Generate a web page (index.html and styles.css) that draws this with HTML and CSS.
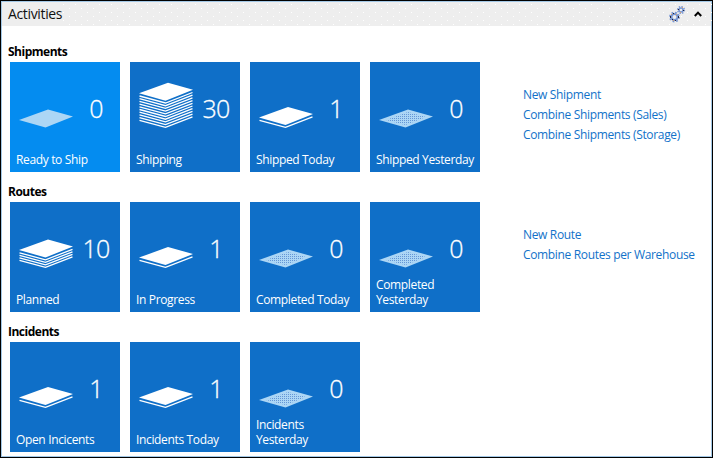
FILE: index.html
```html
<!DOCTYPE html>
<html lang="en">
<head>
<meta charset="utf-8">
<title>Activities</title>
<link rel="stylesheet" href="styles.css">
</head>
<body>
<svg class="defs" width="0" height="0" aria-hidden="true">
  <defs>
    <pattern id="dots" width="4" height="4" patternUnits="userSpaceOnUse">
      <rect width="4" height="4" fill="#acd6f5"/>
      <rect x="0" y="0" width="1" height="1" fill="#6496d6"/>
      <rect x="2" y="0" width="1" height="1" fill="#6496d6"/>
      <rect x="0" y="2" width="1" height="1" fill="#6496d6"/>
      <rect x="2" y="2" width="1" height="1" fill="#6496d6"/>
    </pattern>
    <pattern id="header-dots" width="12" height="8" patternUnits="userSpaceOnUse">
      <rect x="1" y="1" width="1" height="1" fill="#fff"/>
      <rect x="7" y="5" width="1" height="1" fill="#fff"/>
    </pattern>
    <path id="sheet" d="M9 58L38 47.5L63 54.5L35.5 65.5Z"/>
    <path id="edge" d="M9.5 58.3L35.5 65.3L62.5 54.8"/>
    <path id="inner" d="M16 58L38 50L56 55L35.5 63Z"/>
    <g id="blank"><use href="#sheet" class="flat"/><use href="#inner" class="dotted"/></g>
    <g id="stack2"><use href="#edge"/><use href="#sheet" class="top" y="-2.4"/></g>
    <g id="stack5"><use href="#edge"/><use href="#edge" y="-2.5"/><use href="#edge" y="-5"/><use href="#edge" y="-7.5"/><use href="#sheet" class="top" y="-10"/></g>
    <g id="stack11"><use href="#edge"/><use href="#edge" y="-2.7"/><use href="#edge" y="-5.4"/><use href="#edge" y="-8.1"/><use href="#edge" y="-10.8"/><use href="#edge" y="-13.5"/><use href="#edge" y="-16.2"/><use href="#edge" y="-18.9"/><use href="#edge" y="-21.6"/><use href="#edge" y="-24.3"/><use href="#sheet" class="top" y="-26.8"/></g>
  </defs>
</svg>
<main class="window">
  <header class="header">
    <svg class="header-dots" width="650" height="22"><rect width="650" height="22" fill="url(#header-dots)"/></svg>
    <h1>Activities</h1>
    <svg class="gears" width="17" height="17" viewBox="0 0 17 17">
      <g fill="none" stroke="#7796d2">
        <circle cx="5.5" cy="11" r="3" stroke-width="2"/>
        <circle cx="5.5" cy="11" r="4.6" stroke-width="1.6" stroke-dasharray="1.8 1.8"/>
        <circle cx="12" cy="4" r="2" stroke-width="1.6"/>
        <circle cx="12" cy="4" r="3.4" stroke-width="1.4" stroke-dasharray="1.4 1.27"/>
      </g>
      <g fill="#24243c"><path d="M1 10h1v2H1zM9 10h1v2H9zM4 7h1v1H4zM6 14h1v1H6zM9 3h1v1H9zM14 4h1v1h-1zM3 13h1v1H3z"/></g>
      <g fill="#dda066"><path d="M7 8h1v1H7zM2 8h1v1H2zM4 14h1v1H4zM13 1h1v1h-1zM11 6h1v1h-1z"/></g>
    </svg>
    <svg class="chevron" width="8" height="6" viewBox="0 0 8 6"><path d="M.8 5L4 1.6L7.2 5" fill="none" stroke="#000" stroke-width="2"/></svg>
  </header>

  <section class="group">
    <div class="cues">
      <h2>Shipments</h2>
      <div class="tiles">
        <div class="tile active"><svg class="pic"><use href="#sheet" class="flat"/></svg><b>0</b><span>Ready to Ship</span></div>
        <div class="tile"><svg class="pic"><use href="#stack11"/></svg><b>30</b><span>Shipping</span></div>
        <div class="tile"><svg class="pic"><use href="#stack2"/></svg><b>1</b><span>Shipped Today</span></div>
        <div class="tile"><svg class="pic"><use href="#blank"/></svg><b>0</b><span>Shipped Yesterday</span></div>
      </div>
    </div>
    <nav class="links"><a>New Shipment</a><a>Combine Shipments (Sales)</a><a>Combine Shipments (Storage)</a></nav>
  </section>

  <section class="group">
    <div class="cues">
      <h2>Routes</h2>
      <div class="tiles">
        <div class="tile"><svg class="pic"><use href="#stack5"/></svg><b>10</b><span>Planned</span></div>
        <div class="tile"><svg class="pic"><use href="#stack2"/></svg><b>1</b><span>In Progress</span></div>
        <div class="tile"><svg class="pic"><use href="#blank"/></svg><b>0</b><span>Completed Today</span></div>
        <div class="tile"><svg class="pic"><use href="#blank"/></svg><b>0</b><span>Completed<br>Yesterday</span></div>
      </div>
    </div>
    <nav class="links"><a>New Route</a><a>Combine Routes per Warehouse</a></nav>
  </section>

  <section class="group">
    <div class="cues">
      <h2>Incidents</h2>
      <div class="tiles">
        <div class="tile"><svg class="pic"><use href="#stack2"/></svg><b>1</b><span>Open Incicents</span></div>
        <div class="tile"><svg class="pic"><use href="#stack2"/></svg><b>1</b><span>Incidents Today</span></div>
        <div class="tile"><svg class="pic"><use href="#blank"/></svg><b>0</b><span>Incidents<br>Yesterday</span></div>
      </div>
    </div>
  </section>
</main>
</body>
</html>
```

FILE: styles.css
```css
* { box-sizing: border-box; }
body { margin: 0; background: #fff; font: 12px/15px "Open Sans", "Noto Sans", sans-serif; overflow: hidden; }
.defs { position: absolute; }
.window { width: 713px; height: 458px; border: 1px solid #000; box-shadow: inset 0 0 0 1px #a3c8e6; padding: 1px; }
.header { position: relative; height: 24px; background: #eee; display: flex; align-items: center; padding: 0 9px 0 6px; }
.header-dots { position: absolute; left: 60px; top: 1px; }
h1 { margin: 0 auto 0 0; font-size: 14px; font-weight: 400; line-height: 22px; letter-spacing: -.35px; color: #111; }
.gears, .chevron { position: relative; }
.gears { margin-right: 8px; }
.group { display: flex; height: 140px; }
.group:first-of-type { margin-top: 17px; }
.cues { width: 521px; padding-left: 6px; }
h2 { margin: 0; height: 19px; font-size: 12px; line-height: 18px; font-weight: 700; letter-spacing: -.5px; color: #000; }
.tiles { display: flex; gap: 10px; padding-left: 2px; }
.tile { width: 110px; height: 110px; background: #0f6fc8; color: #fff; display: grid; grid-template: 1fr auto / 1fr; }
.active { background: #048cf0; }
.pic { grid-area: 1 / 1 / 3 / 2; width: 110px; height: 110px; }
.tile b { grid-area: 1 / 1 / 3 / 2; place-self: start end; width: 48px; margin-top: 28px; font-size: 25px; line-height: 36px; font-weight: 300; text-align: center; letter-spacing: -.8px; -webkit-text-stroke: .3px #fff; }
.tile span { grid-area: 2 / 1; padding: 0 0 5px 6px; letter-spacing: -.35px; white-space: nowrap; }
.top { fill: #fff; }
#edge { fill: none; stroke: #fff; stroke-width: 1.3; }
.flat { fill: #acd6f5; }
.dotted { fill: url(#dots); }
.links { padding-top: 42px; display: flex; flex-direction: column; }
.links a { color: #1272c9; line-height: 20px; letter-spacing: -.34px; white-space: nowrap; }
```
